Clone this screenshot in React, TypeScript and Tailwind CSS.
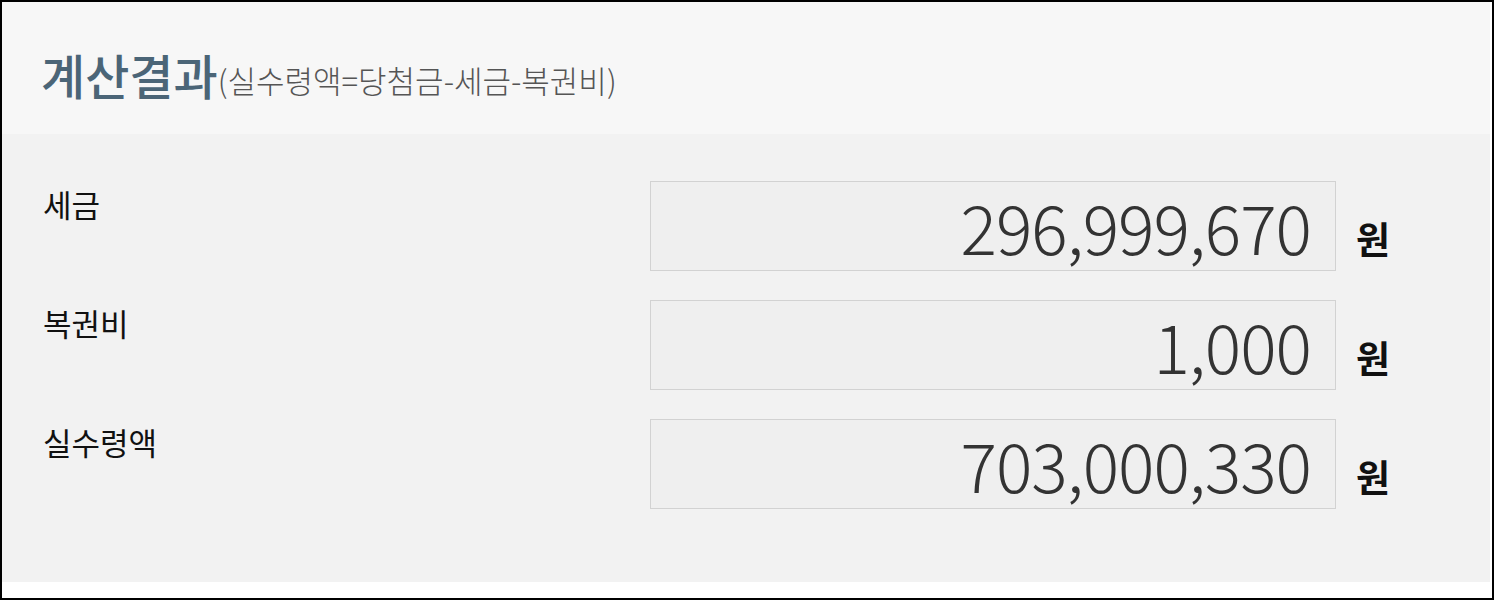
import React from 'react';

const rows = [
  { label: '세금', value: '296,999,670' },
  { label: '복권비', value: '1,000' },
  { label: '실수령액', value: '703,000,330' },
];

const ResultRow = ({ label, value }: { label: string; value: string }) => (
  <div className="flex items-start">
    <div className="w-[607px] pt-[1px] text-[31px] leading-[44px] text-[#111]">{label}</div>
    <div className="w-[686px] h-[90px] border border-[#d2d2d2] bg-[#efefef] flex items-center justify-end pr-[24px]">
      <span className="text-[68px] leading-none font-light text-[#333] tracking-[-1px]">{value}</span>
    </div>
    <div className="ml-[20px] mt-[39px] text-[37px] leading-none font-bold text-[#111]">원</div>
  </div>
);

export default function App() {
  return (
    <div
      className="w-[1494px] h-[600px] border-2 border-black bg-white overflow-hidden"
      style={{ fontFamily: '"Noto Sans CJK KR", "Noto Sans", sans-serif' }}
    >
      <div className="mr-[2px]">
        {/* header */}
        <div className="h-[132px] bg-[#f7f7f7] flex items-center pl-[39px] pt-[12px]">
          <h2 className="text-[48px] font-medium text-[#4b6577]">계산결과</h2>
          <span className="mt-[12px] text-[31px] font-light text-[#555]">(실수령액=당첨금-세금-복권비)</span>
        </div>

        {/* results */}
        <div className="bg-[#f2f2f2] pt-[47px] pb-[73px] pl-[41px] flex flex-col gap-[29px]">
          {rows.map((r) => (
            <ResultRow key={r.label} label={r.label} value={r.value} />
          ))}
        </div>
      </div>
    </div>
  );
}
